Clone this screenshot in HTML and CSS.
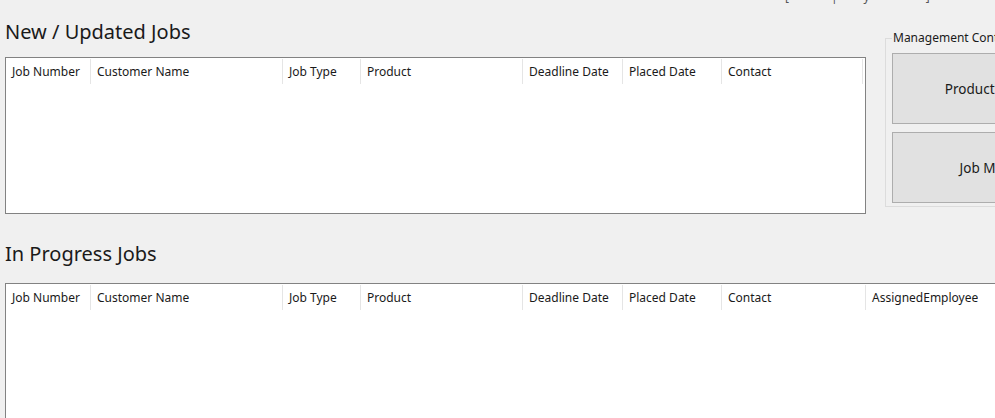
FILE: index.html
```html
<!DOCTYPE html>
<html>
<head>
<meta charset="utf-8">
<link rel="stylesheet" href="styles.css">
</head>
<body>
<div class="page">
  <div class="strip">
    <span class="s1">[</span><span class="s2">|</span><span class="s3">y</span><span class="s4">]</span>
  </div>
  <div class="row1">
    <section class="left">
      <h1 class="title">New / Updated Jobs</h1>
      <div class="list list-new">
        <div class="hdr">
          <div class="col c1">Job Number</div>
          <div class="col c2">Customer Name</div>
          <div class="col c3">Job Type</div>
          <div class="col c4">Product</div>
          <div class="col c5">Deadline Date</div>
          <div class="col c6">Placed Date</div>
          <div class="col c7">Contact</div>
        </div>
      </div>
    </section>
    <fieldset class="group">
      <legend>Management Controls</legend>
      <button class="btn">Product Management</button>
      <button class="btn">Job Management</button>
    </fieldset>
  </div>
  <h1 class="title title2">In Progress Jobs</h1>
  <div class="list list-prog">
    <div class="hdr">
      <div class="col c1">Job Number</div>
      <div class="col c2">Customer Name</div>
      <div class="col c3">Job Type</div>
      <div class="col c4">Product</div>
      <div class="col c5">Deadline Date</div>
      <div class="col c6">Placed Date</div>
      <div class="col c7b">Contact</div>
      <div class="col c8">AssignedEmployee</div>
    </div>
  </div>
</div>
</body>
</html>
```
FILE: styles.css
```css
html, body {
  margin: 0;
  padding: 0;
  background: #f0f0f0;
  width: 995px;
  height: 418px;
  overflow: hidden;
  font-family: "Noto Sans", "Open Sans", sans-serif;
  color: #1a1a1a;
}
.page {
  padding-left: 5px;
  width: 1200px;
}
.strip {
  height: 4px;
  overflow: hidden;
  display: flex;
  font-size: 12px;
  line-height: 12px;
  color: #555;
}
.strip span {
  display: block;
  margin-top: -9px;
}
.s1 { margin-left: 780px; }
.s2 { margin-left: 42px; }
.s3 { margin-left: 26px; }
.s4 { margin-left: 56px; }

.row1 {
  display: flex;
  align-items: flex-start;
}
.left {
  width: 860px;
}
.title {
  margin: 0;
  font-weight: normal;
  font-size: 20px;
  line-height: 28px;
  height: 28px;
  padding-top: 14px;
  padding-bottom: 11px;
}
.title2 {
  padding-top: 26px;
  padding-bottom: 15px;
}
.list {
  background: #fff;
  border: 1px solid #828282;
  box-sizing: border-box;
}
.list-new {
  width: 861px;
  height: 157px;
}
.list-prog {
  width: 1100px;
  height: 200px;
}
.hdr {
  display: flex;
  height: 25px;
  padding-top: 1px;
}
.col {
  box-sizing: border-box;
  border-right: 1px solid #e5e5e5;
  font-size: 12px;
  line-height: 24px;
  padding-top: 1px;
  padding-left: 6px;
  white-space: nowrap;
  overflow: hidden;
}
.c1 { width: 85px; }
.c2 { width: 192px; }
.c3 { width: 78px; }
.c4 { width: 162px; }
.c5 { width: 100px; }
.c6 { width: 99px; }
.c7 { width: 141px; }
.c7b { width: 144px; }
.c8 { border-right: none; }

.group {
  margin: 27px 0 0 20px;
  padding: 8px 0 10px 6px;
  border: 1px solid #dcdcdc;
  width: 300px;
  height: 176px;
  box-sizing: border-box;
  min-width: 0;
}
.group legend {
  font-size: 12px;
  padding: 0 1px;
  margin-left: 0;
  color: #1a1a1a;
  line-height: 14px;
}
.btn {
  display: block;
  width: 244px;
  height: 71px;
  background: #e1e1e1;
  border: 1px solid #adadad;
  font-family: inherit;
  font-size: 13.5px;
  color: #1a1a1a;
  margin: 0 0 8px 0;
  padding: 0;
}
.btn:last-child { margin-bottom: 0; }
```
